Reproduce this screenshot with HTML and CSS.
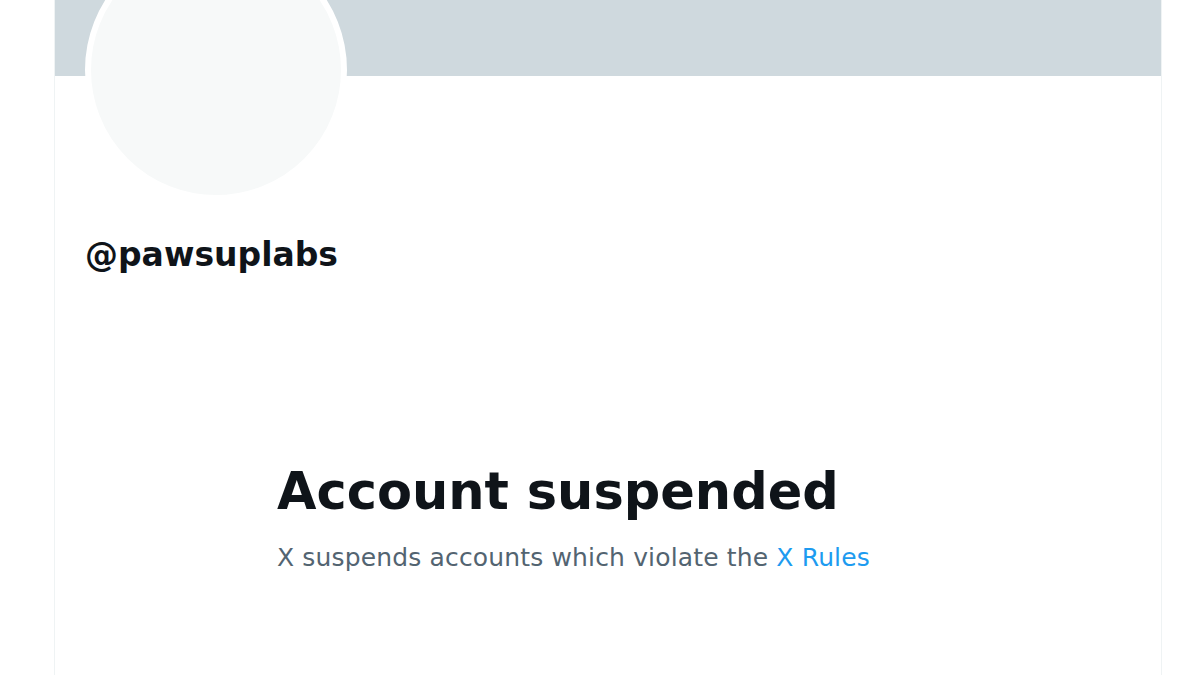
FILE: index.html
```html
<!DOCTYPE html>
<html lang="en">
<head>
<meta charset="utf-8">
<title>@pawsuplabs</title>
<link rel="stylesheet" href="styles.css">
</head>
<body>
<main class="column">
  <div class="banner"></div>
  <div class="avatar-row">
    <div class="avatar"></div>
  </div>
  <div class="handle">@pawsuplabs</div>
  <section class="empty">
    <div class="empty-box">
      <h1 class="empty-title">Account suspended</h1>
      <p class="empty-text">X suspends accounts which violate the <a class="link" href="#">X Rules</a></p>
    </div>
  </section>
</main>
</body>
</html>
```
FILE: styles.css
```css
html, body {
  margin: 0;
  padding: 0;
  background: #ffffff;
  height: 675px;
  overflow: hidden;
}
body {
  font-family: "DejaVu Sans", "Liberation Sans", sans-serif;
  color: #0f1419;
}
.column {
  margin-left: 54px;
  width: 1106px;
  min-height: 675px;
  border-left: 1px solid #eff3f4;
  border-right: 1px solid #eff3f4;
  display: flex;
  flex-direction: column;
}
.banner {
  height: 76px;
  background: #cfd9de;
}
.avatar-row {
  display: flex;
  padding-left: 30px;
  margin-top: -137px;
}
.avatar {
  width: 250px;
  height: 250px;
  border-radius: 50%;
  background: #f7f9f9;
  border: 6px solid #ffffff;
}
.handle {
  margin-top: 34px;
  padding-left: 30px;
  font-size: 33px;
  line-height: 40px;
  font-weight: bold;
  color: #0f1419;
}
.empty {
  display: flex;
  justify-content: center;
  margin-top: 187px;
}
.empty-box {
  width: 662px;
}
.empty-title {
  margin: 0;
  font-size: 51px;
  line-height: 60px;
  font-weight: bold;
  color: #0f1419;
}
.empty-text {
  margin: 21px 0 0;
  font-size: 25px;
  line-height: 30px;
  letter-spacing: 0.15px;
  color: #536471;
}
.link {
  color: #1d9bf0;
  text-decoration: none;
}
```
